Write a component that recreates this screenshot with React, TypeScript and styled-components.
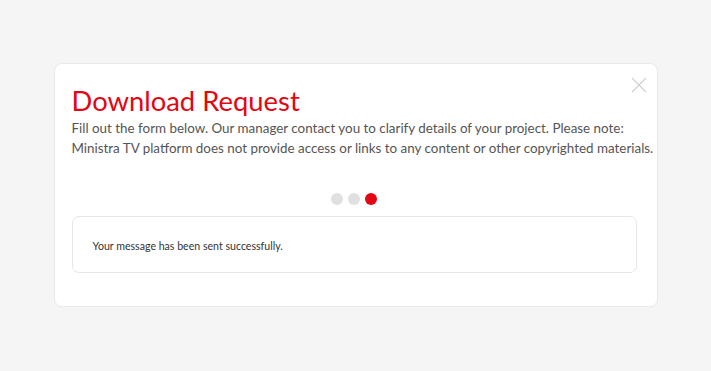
import React from 'react';
import styled, { createGlobalStyle } from 'styled-components';

const GlobalStyle = createGlobalStyle`
  body {
    margin: 0;
    background: #f5f5f5;
    font-family: Lato, "Open Sans", sans-serif;
  }
`;

const Page = styled.div`
  min-height: 371px;
  display: flex;
  align-items: center;
  justify-content: center;
`;

const Card = styled.div`
  position: relative;
  box-sizing: border-box;
  width: 604px;
  height: 244px;
  margin-top: -2px;
  padding: 20px 20px 0 17px;
  background: #fff;
  border: 1px solid #e9e9e9;
  border-radius: 8px;
`;

const Close = styled.button`
  position: absolute;
  top: 12px;
  right: 9px;
  width: 18px;
  height: 18px;
  padding: 0;
  border: none;
  background: none;
  cursor: pointer;
`;

const Title = styled.h1`
  margin: 0;
  font-size: 27.4px;
  font-weight: 400;
  line-height: 34px;
  color: #e30613;
`;

const Lead = styled.p`
  margin: 0;
  font-size: 13.4px;
  line-height: 20px;
  color: #555;
  white-space: nowrap;
`;

const Steps = styled.div`
  display: flex;
  justify-content: center;
  gap: 5px;
  margin: 35px 0 11px;
`;

const Dot = styled.span<{ $active?: boolean }>`
  width: 12px;
  height: 12px;
  border-radius: 50%;
  background: ${(p) => (p.$active ? '#e30613' : '#e0e0e0')};
`;

const MessageBox = styled.div`
  box-sizing: border-box;
  height: 57px;
  display: flex;
  align-items: center;
  padding: 4px 20px 0;
  border: 1px solid #e6e6e6;
  border-radius: 7px;
  font-size: 10.6px;
  color: #333;
`;

export default function App() {
  return (
    <>
      <GlobalStyle />
      <Page>
        <Card>
          <Close aria-label="Close">
            <svg width="18" height="18" viewBox="0 0 18 18">
              <path d="M2 2 L16 16 M16 2 L2 16" stroke="#d0d0d0" strokeWidth="1.2" fill="none" />
            </svg>
          </Close>
          <Title>Download Request</Title>
          <Lead>
            Fill out the form below. Our manager contact you to clarify details of your project. Please note:
            <br />
            Ministra TV platform does not provide access or links to any content or other copyrighted materials.
          </Lead>
          <Steps>
            <Dot />
            <Dot />
            <Dot $active />
          </Steps>
          <MessageBox>Your message has been sent successfully.</MessageBox>
        </Card>
      </Page>
    </>
  );
}
